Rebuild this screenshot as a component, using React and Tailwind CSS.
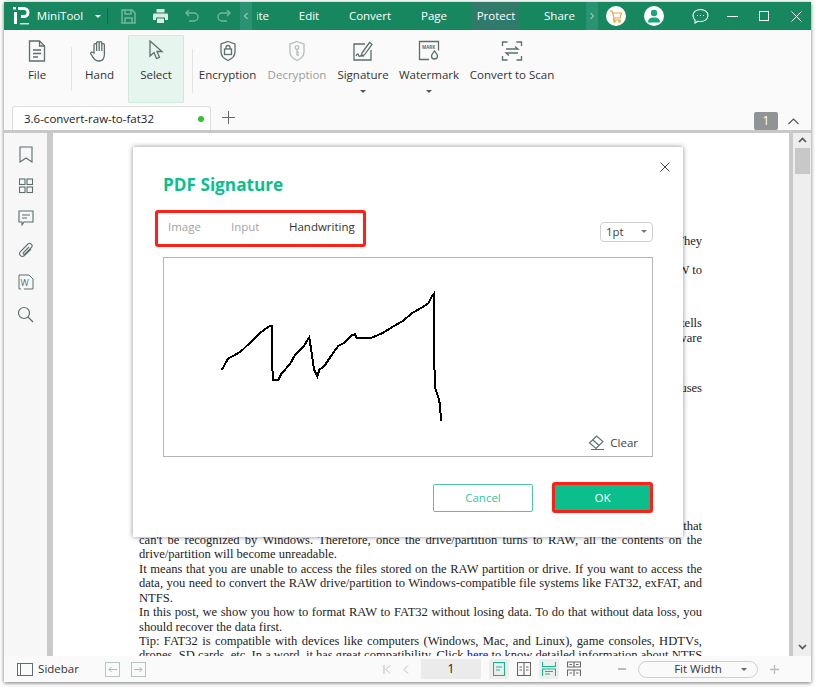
import React from "react";

const Ic = ({ className = "", w = 24, h = 24, vb, children, sw = 1.3, stroke = "#5d6e6e" }) => (
  <svg width={w} height={h} viewBox={vb || `0 0 ${w} ${h}`} fill="none" stroke={stroke} strokeWidth={sw} className={className}>
    {children}
  </svg>
);

function TopIcon({ children, dim }) {
  return <div className={`w-[32px] flex justify-center ${dim ? "opacity-40" : ""}`}>{children}</div>;
}

function Tool({ label, icon, w, ml, caret, disabled, active }) {
  return (
    <div
      className={`flex flex-col items-center shrink-0 h-[68px] pt-px ${w} ${ml} ${active ? "bg-[#e6f5ee] shadow-[inset_0_0_0_1px_#cfeadf] rounded-[2px]" : ""}`}
    >
      <div className="h-[30px] flex items-center justify-center">{icon}</div>
      <div className={`text-[11.5px] leading-[16px] mt-px whitespace-nowrap ${disabled ? "text-[#9a9a9a]" : "text-[#333]"}`}>{label}</div>
      {caret && <div className="mt-[7px] w-0 h-0 border-x-[3px] border-x-transparent border-t-[3px] border-t-[#555]" />}
    </div>
  );
}

const Sep = ({ ml, mt }) => <div className={`w-px h-[44px] bg-[#e3e3e3] shrink-0 self-start ${ml} ${mt}`} />;

function DocLine({ children, end }) {
  return (
    <div className={`h-[14.43px] leading-[14.43px] whitespace-nowrap ${end ? "text-left" : "text-justify [text-align-last:justify]"}`}>{children}</div>
  );
}

const Frag = ({ t, children }) => (
  <div className={`h-[14.43px] leading-[14.43px] text-right ${t}`}>{children}</div>
);

const Nav = ({ w, ml, children }) => (
  <span className={`${w} ${ml} shrink-0 flex justify-center whitespace-nowrap`}>{children}</span>
);

export default function App() {
  return (
    <div className="w-[818px] h-[687px] bg-white overflow-hidden relative" style={{ fontFamily: '"Open Sans","Noto Sans",sans-serif' }}>
      <div className="ml-[4px] mt-[2px] w-[807px] h-[680px] flex flex-col bg-[#fafafa] shadow-[0_1px_4px_rgba(0,0,0,0.55)] relative">
        {/* Title bar */}
        <div className="h-[28px] bg-[#16875f] flex items-center text-white text-[11.5px] shrink-0">
          <div className="ml-[9px] w-[17px] h-[21px] relative">
            <svg width="17" height="21" viewBox="0 0 17 21">
              <path d="M0 1h3v2.500H0zM1 6h3v12H1z" fill="#fff" />
              <path d="M5 1h6a5.500 5.500 0 0 1 0 11H8V9h3a2.500 2.500 0 0 0 0-5H5z" fill="#fff" />
              <path d="M7 17h9v1.500H7z" fill="#cfe9dd" />
            </svg>
          </div>
          <Nav w="w-[46px]" ml="ml-[7px]">MiniTool</Nav>
          <div className="ml-[12px] w-0 h-0 border-x-[3px] border-x-transparent border-t-[3px] border-t-white" />
          <div className="ml-[6px] w-px h-[16px] bg-[#0f6a4a]" />
          <div className="ml-[4px] flex">
            <TopIcon dim>
              <Ic w={15} h={15} stroke="#fff" sw={1.5}><path d="M1 1h10l3 3v10H1z" /><path d="M4 1v4h6V1M4 14V9h7v5" /></Ic>
            </TopIcon>
            <TopIcon>
              <svg width="15" height="14" viewBox="0 0 15 14" fill="#dfe9e5"><path d="M3.500 0h8v3.500h-8zM1 4.500h13a1 1 0 0 1 1 1V11h-3V8.500H3V11H0V5.500a1 1 0 0 1 1-1zM4 9.500h7V14H4z" /></svg>
            </TopIcon>
            <TopIcon dim>
              <Ic w={14} h={14} stroke="#fff" sw={1.4}><path d="M4 1 1 4l3 3M1 4h8a4 4 0 0 1 0 8H4" /></Ic>
            </TopIcon>
            <TopIcon dim>
              <Ic w={14} h={14} stroke="#fff" sw={1.4}><path d="m10 1 3 3-3 3M13 4H5a4 4 0 0 0 0 8h5" /></Ic>
            </TopIcon>
          </div>
          <div className="w-[12px] h-full bg-[#2a9373] flex items-center justify-center">
            <Ic w={6} h={8} stroke="#cde6dc" sw={1}><path d="M4.500 1 1.500 4l3 3" /></Ic>
          </div>
          <div className="w-[12px] overflow-hidden ml-[5px] flex justify-end"><span>ite</span></div>
          <Nav w="w-[20px]" ml="ml-[30px]">Edit</Nav>
          <Nav w="w-[42px]" ml="ml-[30px]">Convert</Nav>
          <Nav w="w-[26px]" ml="ml-[30px]">Page</Nav>
          <div className="ml-[25px] w-[48px] h-full bg-[#2f7a68] flex items-center justify-center">Protect</div>
          <Nav w="w-[29px]" ml="ml-[25px]">Share</Nav>
          <div className="ml-[12px] w-[12px] h-full bg-[#2a9373] flex items-center justify-center">
            <Ic w={6} h={8} stroke="#cde6dc" sw={1}><path d="m1.500 1 3 3-3 3" /></Ic>
          </div>
          <div className="ml-[8px] w-[20px] h-[20px] rounded-full bg-white flex items-center justify-center">
            <Ic w={14} h={14} stroke="#e8a33d" sw={1.100}><path d="M1 2h2l2 7h6l1.500-5H4M5 9l-.5 2H12" /><circle cx="5.500" cy="12.500" r=".8" /><circle cx="10.500" cy="12.500" r=".8" /></Ic>
          </div>
          <div className="ml-[18px] w-[20px] h-[20px] rounded-full bg-white flex items-center justify-center">
            <svg width="14" height="14" viewBox="0 0 14 14" fill="#17a57c"><circle cx="7" cy="4" r="3.200" /><path d="M1 13.500c0-4 2.500-5 6-5s6 1 6 5z" /></svg>
          </div>
          <div className="ml-[28px]">
            <Ic w={17} h={16} stroke="#fff" sw={1.100}><path d="M8.500 1.500c4 0 7.500 2.500 7.500 6s-3.500 6-7.500 6c-1 0-2 0-2.500-.3L3 15v-3C1.800 11 1 9.500 1 7.500c0-3.500 3.500-6 7.500-6z" /><path d="M5 7.500h1M8 7.500h1M11 7.500h1" /></Ic>
          </div>
          <div className="ml-[18px] w-[11px] h-px bg-white" />
          <div className="ml-[21px] w-[10px] h-[10px] border border-white" />
          <div className="ml-[22px]">
            <Ic w={11} h={11} stroke="#fff" sw={1}><path d="m.5.5 10 10M10.500.5l-10 10" /></Ic>
          </div>
        </div>

        {/* Toolbar */}
        <div className="h-[75px] shrink-0 flex items-start pt-[5px] pl-[8px]">
          <Tool w="w-[50px]" label="File" icon={
            <Ic w={18} h={22}><path d="M1.500 1h10l5 5v15h-15z" /><path d="M11.500 1v5h5M5 10h8M5 13.500h8M5 17h5" /></Ic>} />
          <Sep ml="ml-[9px]" mt="mt-[12px]" />
          <Tool ml="ml-[13px]" w="w-[29px]" label="Hand" icon={
            <Ic w={20} h={22}><path d="M4 13V5a1.300 1.300 0 0 1 2.600 0v6V3a1.300 1.300 0 0 1 2.600 0v8V3a1.300 1.300 0 0 1 2.600 0v8V5a1.300 1.300 0 0 1 2.600 0v9c0 4-2 7-5.500 7-4 0-5-2-8-7-.8-1.500 1-2.500 2-1.500z" /></Ic>} />
          <Tool active ml="ml-[14px]" w="w-[56px]" label="Select" icon={
            <Ic w={16} h={22}><path d="M2 1v15l4-3.500 2.500 6 3-1.200L9 11.500h5z" /></Ic>} />
          <Sep ml="ml-[8px]" mt="mt-[14px]" />
          <Tool ml="ml-[6px]" w="w-[57px]" label="Encryption" icon={
            <Ic w={18} h={22}><path d="M9 1.500 16 4v8c0 4-3.500 7-7 8.500C5.500 19 2 16 2 12V4z" /><rect x="5.500" y="9" width="7" height="5.500" /><path d="M7 9V7.500a2 2 0 0 1 4 0V9" /></Ic>} />
          <Tool disabled ml="ml-[12px]" w="w-[58px]" label="Decryption" icon={
            <Ic w={18} h={22} stroke="#b5bebe"><path d="M9 1.500 16 4v8c0 4-3.500 7-7 8.500C5.500 19 2 16 2 12V4z" /><circle cx="9" cy="7.500" r="1.800" /><path d="M9 9.300V15.500M9 12.500h2M9 15h2" /></Ic>} />
          <Tool caret ml="ml-[12px]" w="w-[50px]" label="Signature" icon={
            <Ic w={22} h={22}><path d="M13 4H2v16h17V10" /><path d="m10 13 7.500-10.500 2.500 1.800-7.500 10.500-3 1z" /><path d="M4 16c1-2.500 2-2.500 2.500-1 .4 2 1.500 1.500 2.500.5l3 .5" /></Ic>} />
          <Tool caret ml="ml-[12px]" w="w-[58px]" label="Watermark" icon={
            <Ic w={22} h={22}><path d="M11 19.500H1.500v-18h19v9" /><path d="M16.500 11c2 2.500 3 3.500 3 5a3 3 0 0 1-6 0c0-1.500 1-2.500 3-5z" /><text x="4" y="8.500" fontSize="4.500" fontWeight="700" stroke="none" fill="#5d6e6e">MARK</text></Ic>} />
          <Tool ml="ml-[12px]" w="w-[84px]" label="Convert to Scan" icon={
            <Ic w={22} h={22}><path d="M1.500 6V2h5M15.500 2h5v4M1.500 16v4h5M15.500 20h5v-4M5 9h12l-3-2.500M17 13H5l3 2.500" /></Ic>} />
        </div>

        {/* Tabs */}
        <div className="h-[25px] shrink-0 flex items-end relative">
          <div className="ml-[8px] w-[199px] h-[24px] bg-white border border-b-0 border-[#ddd] rounded-t-[3px] flex items-center pl-[11px] text-[11.5px] text-[#222]">
            <span className="flex-1">3.6-convert-raw-to-fat32</span>
            <span className="w-[6px] h-[6px] rounded-full bg-[#2fc42f] mr-[6px]" />
          </div>
          <div className="ml-[11px] self-center">
            <Ic w={13} h={13} stroke="#666" sw={1}><path d="M6.500 0v13M0 6.500h13" /></Ic>
          </div>
          <div className="ml-auto mr-[33px] w-[24px] h-[18px] bg-[#909496] text-white text-[12px] rounded-[2px] flex items-center justify-center">1</div>
          <div className="absolute right-[12px] top-[13px]">
            <Ic w={11} h={7} stroke="#555" sw={1.200}><path d="m.5 6 5-5 5 5" /></Ic>
          </div>
        </div>
        <div className="h-[3px] bg-[#c8c8c8] shrink-0" />

        {/* Body */}
        <div className="flex-1 flex min-h-0">
          <div className="w-[43px] shrink-0 bg-[#f7f7f7] flex flex-col items-center pt-[13px]">
            <div className="h-[32px] flex items-start"><Ic w={14} h={17} sw={1.100}><path d="M1 1h12v15l-6-4-6 4z" /></Ic></div>
            <div className="h-[32px] flex items-start"><Ic w={14} h={16} sw={1.100}><rect x=".5" y="1" width="5.500" height="5.500" /><rect x="8" y="1" width="5.500" height="5.500" /><rect x=".5" y="9" width="5.500" height="5.500" /><rect x="8" y="9" width="5.500" height="5.500" /></Ic></div>
            <div className="h-[32px] flex items-start"><Ic w={16} h={16} sw={1.100}><path d="M1 1h14v11H6l-2 3v-3H1zM4 5h8M4 8h5" /></Ic></div>
            <div className="h-[32px] flex items-start"><Ic w={16} h={17} sw={1.100}><path d="m13 7-6.500 6.500c-3 2.500-6.500-1-4-4L10 2c2-2 5.500 1 3.500 3.500L7 12c-1 1-2.500 0-1.500-1.500L11 5" /></Ic></div>
            <div className="h-[32px] flex items-start"><Ic w={16} h={17} sw={1}><path d="M11 1H1v14h2M11 1l4 4v10H6" /><text x="2.500" y="12" fontSize="9" fontWeight="400" stroke="none" fill="#5d6e6e">W</text></Ic></div>
            <div className="h-[32px] flex items-start"><Ic w={17} h={17} sw={1.200}><circle cx="7" cy="7" r="5.500" /><path d="m11 11 5 5" /></Ic></div>
          </div>
          <div className="w-[6px] shrink-0 bg-[#cacaca]" />
          <div className="w-[736px] shrink-0 bg-white overflow-hidden pl-[86px] pr-[87px] text-[12.55px] text-[#222] pt-[101px]" style={{ fontFamily: '"Liberation Serif",serif' }}>
            <Frag>They</Frag>
            <Frag t="mt-[14.5px]">RAW to</Frag>
            <Frag t="mt-[38.5px]">tells</Frag>
            <Frag t="mt-px">malware</Frag>
            <Frag t="mt-[35.5px]">causes</Frag>
            <Frag t="mt-[123px]">that</Frag>
            <DocLine>can't be recognized by Windows. Therefore, once the drive/partition turns to RAW, all the contents on the</DocLine>
            <DocLine end>drive/partition will become unreadable.</DocLine>
            <DocLine>It means that you are unable to access the files stored on the RAW partition or drive. If you want to access the</DocLine>
            <DocLine>data, you need to convert the RAW drive/partition to Windows-compatible file systems like FAT32, exFAT, and</DocLine>
            <DocLine end>NTFS.</DocLine>
            <DocLine>In this post, we show you how to format RAW to FAT32 without losing data. To do that without data loss, you</DocLine>
            <DocLine end>should recover the data first.</DocLine>
            <DocLine>Tip: FAT32 is compatible with devices like computers (Windows, Mac, and Linux), game consoles, HDTVs,</DocLine>
            <DocLine>drones, SD cards, etc. In a word, it has great compatibility. Click <span className="text-[#0000ee]">here</span> to know detailed information about NTFS</DocLine>
          </div>
          <div className="w-[4px] shrink-0 bg-[#cacaca]" />
          <div className="flex-1 bg-[#eeeeee] flex flex-col items-center relative pt-[4px]">
            <Ic w={9} h={6} stroke="#555" sw={1.700}><path d="m1 5 3.500-3.500L8 5" /></Ic>
            <div className="mt-[5px] w-[15px] h-[26px] bg-[#c8c8c8]" />
            <div className="mt-auto mb-[6px]"><Ic w={9} h={6} stroke="#555" sw={1.700}><path d="m1 1 3.500 3.500L8 1" /></Ic></div>
          </div>
        </div>

        {/* Status bar */}
        <div className="h-[26px] shrink-0 bg-[#fafafa] flex items-center text-[11.5px] text-[#333] relative">
          <div className="ml-[13px] w-[16px] h-[13px] border border-[#5d6e6e] pl-[2px]"><div className="w-px h-full bg-[#5d6e6e]" /></div>
          <Nav w="w-[39px]" ml="ml-[6px]">Sidebar</Nav>
          <div className="ml-[27px] w-[15px] h-[15px] border border-[#b5c4c4] flex items-center justify-center">
            <Ic w={9} h={7} stroke="#a9b8b8" sw={1}><path d="M9 3.500H1M3.500 1 1 3.500 3.500 6" /></Ic>
          </div>
          <div className="ml-[11px] w-[15px] h-[15px] border border-[#b5c4c4] flex items-center justify-center">
            <Ic w={9} h={7} stroke="#a9b8b8" sw={1}><path d="M0 3.500h8M5.500 1 8 3.500 5.500 6" /></Ic>
          </div>
          <div className="ml-[237px]"><Ic w={8} h={9} stroke="#bbb" sw={1}><path d="M1 0v9M7 .5 3 4.500l4 4" /></Ic></div>
          <div className="ml-[12px]"><Ic w={6} h={9} stroke="#bbb" sw={1}><path d="M5 .5 1 4.500l4 4" /></Ic></div>
          <div className="ml-[12px] w-[60px] h-[20px] bg-[#ebebeb] flex items-center justify-center text-[#222] text-[12px]">1</div>
          <div className="ml-[8px] w-[20px] h-[20px] bg-[#eeeeee] flex items-center justify-center rounded-[2px]">
            <Ic w={12} h={14} stroke="#14b890" sw={1.100}><rect x=".5" y=".5" width="11" height="13" /><path d="M3 5h6M3 8h4" /></Ic>
          </div>
          <div className="ml-[8px]">
            <Ic w={14} h={14} stroke="#666" sw={1.100}><rect x=".5" y=".5" width="13" height="13" /><path d="M7 .5v13M2.500 5h2.500M2.500 8h2.500M9 5h2.500M9 8h2.500" /></Ic>
          </div>
          <div className="ml-[8px] w-[20px] h-[20px] bg-[#eeeeee] flex items-center justify-center rounded-[2px]">
            <Ic w={14} h={14} stroke="#14b890" sw={1.100}><path d="M.5 0v4.500h13V0M.5 14V7h13v7M3 9.500h8M3 12h5" /></Ic>
          </div>
          <div className="ml-[8px]">
            <Ic w={14} h={16} stroke="#666" sw={1.100}><path d="M.5 1h13v5H.5zM7 1v5M.5 15v-6h13v6M7 9v6M2.500 3.500h2.500M9 3.500h2.500M2.500 12h2.500M9 12h2.500" /></Ic>
          </div>
          <div className="ml-[37px] w-[8px] h-[2px] bg-[#bbb]" />
          <div className="ml-[12px] w-[120px] h-[17px] rounded-full border border-[#cfcfcf] flex items-center justify-center relative text-[#333]">
            Fit Width
            <div className="absolute right-[10px] top-[6px] w-0 h-0 border-x-[3px] border-x-transparent border-t-[3px] border-t-[#666]" />
          </div>
          <div className="ml-[12px]"><Ic w={9} h={9} stroke="#bbb" sw={1.300}><path d="M4.500 0v9M0 4.500h9" /></Ic></div>
        </div>

        {/* Dialog */}
        <div className="absolute left-[129px] top-[145px] w-[550px] h-[390px] bg-white shadow-[0_0_5px_rgba(0,0,0,0.45)] flex flex-col">
          <div className="absolute right-[13px] top-[15px]">
            <Ic w={10} h={10} stroke="#333" sw={.9}><path d="m.5.5 9 9M9.500.5l-9 9" /></Ic>
          </div>
          <div className="ml-[30px] mt-[25px] text-[17.2px] leading-[26px] font-bold text-[#0abf8c]">PDF Signature</div>
          <div className="flex items-start mt-[12px] ml-[22px] h-[37px] relative">
            <div className="w-[211px] h-[37px] border-[3px] border-[#ff2118] rounded-[3px] flex items-center pl-[10px] pb-[4px] text-[11.5px]">
              <span className="w-[33px] text-[#a3a3a3]">Image</span>
              <span className="w-[28px] ml-[30px] text-[#a3a3a3]">Input</span>
              <span className="ml-[30px] text-[#333] whitespace-nowrap">Handwriting</span>
            </div>
            <div className="ml-[234px] mt-[12px] w-[53px] h-[20px] border border-[#cfcfcf] rounded-[4px] flex items-center pl-[5px] text-[11.5px] text-[#444] relative">
              1pt
              <div className="absolute right-[5px] top-[7px] w-0 h-0 border-x-[3px] border-x-transparent border-t-[3px] border-t-[#6b7b7b]" />
            </div>
          </div>
          <div className="ml-[30px] mt-[10px] w-[490px] h-[200px] border border-[#b5b5b5] relative">
            <svg width="488" height="198" viewBox="0 0 488 198" fill="none" stroke="#000" strokeWidth="2" shapeRendering="crispEdges" className="block">
              <path d="M57.700 112 64.300 100.300 69.300 98 77.700 92.700 86 84.700 97.700 73.700 104.300 68.700 107.700 68 108.700 122H114.300L117.700 115.300 126 106 131 97 139.300 88.700 145.300 79.300 150 111.300 153.300 118 155.300 112 161 107 167.700 97 174.300 88 179.300 85.300 187.700 77 191 76.300 192.700 79.700H207.700L219.300 74.700 227.700 69.300 239.300 62.700 247.700 55.300 259.300 48.700 264.300 45.300 267.700 38.700 269.700 36 270.300 107 271.300 130.300 274.700 140.300 276 147 277 162.700" />
            </svg>
            <div className="absolute right-[14px] bottom-[5px] flex items-center text-[11.5px] text-[#444]">
              <Ic w={17} h={17} sw={1.100}><path d="m1.500 9 7-7 6.500 5.500-7 7zM5 6l6 5.500M3 15.500h13" /></Ic>
              <span className="ml-[5px]">Clear</span>
            </div>
          </div>
          <div className="ml-[300px] mt-[25px] flex items-center">
            <div className="w-[100px] h-[28px] border border-[#4cc6a4] rounded-[2px] flex items-center justify-center text-[11.5px] text-[#35c49c]">Cancel</div>
            <div className="ml-[19px] w-[101px] h-[31px] border-[3px] border-[#ff2118] rounded-[3px] bg-[#0abf8c] flex items-center justify-center text-[11.5px] text-white">OK</div>
          </div>
        </div>
      </div>
    </div>
  );
}
